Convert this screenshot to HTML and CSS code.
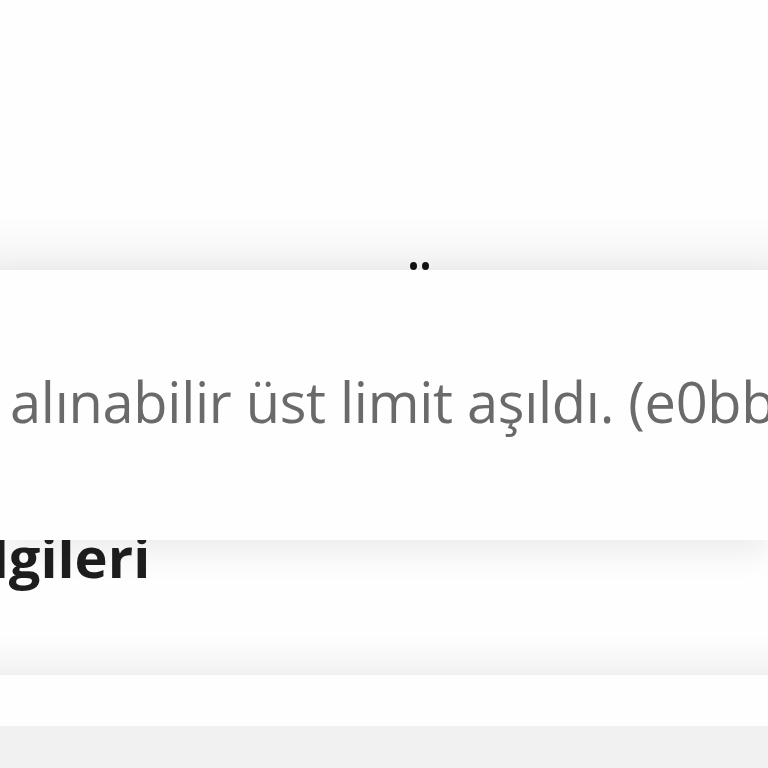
FILE: index.html
```html
<!DOCTYPE html>
<html lang="tr">
<head>
<meta charset="utf-8">
<link rel="stylesheet" href="styles.css">
</head>
<body>
<div class="page">
  <div class="top">
    <span class="dots"><i class="dot"></i><i class="dot"></i></span>
  </div>
  <div class="card">
    <p class="msg">alınabilir üst limit aşıldı. (e0bb</p>
  </div>
  <div class="section">
    <h2 class="heading">Bilgileri</h2>
  </div>
  <div class="card2"></div>
  <div class="rest"></div>
</div>
</body>
</html>
```
FILE: styles.css
```css
html, body {
  margin: 0;
  padding: 0;
  background: #f2f2f2;
  overflow: hidden;
}
.page {
  width: 768px;
  height: 768px;
  display: flex;
  flex-direction: column;
  overflow: hidden;
}
.top {
  height: 270px;
  flex: none;
  background: linear-gradient(to bottom, #fefefe 0, #fefefe 215px, #f9f9f9 245px, #efefef 270px);
  position: relative;
}
.dots {
  position: absolute;
  left: 410px;
  top: 262px;
  display: flex;
  gap: 5px;
}
.dot {
  display: block;
  width: 7px;
  height: 8px;
  border-radius: 50%;
  background: #111;
}
.card {
  height: 270px;
  flex: none;
  background: #fefefe;
  position: relative;
  z-index: 2;
  display: flex;
  align-items: center;
  box-shadow: 0 14px 30px rgba(0,0,0,0.07);
}
.msg {
  margin: 0 0 8px 0;
  padding-left: 10px;
  white-space: nowrap;
  font-family: "Open Sans", sans-serif;
  font-size: 56px;
  color: #6a6a6a;
  letter-spacing: -0.3px;
}
.section {
  height: 135px;
  flex: none;
  background: linear-gradient(to bottom, #fefefe 0, #fefefe 95px, #f6f6f6 125px, #f0f0f0 135px);
  position: relative;
  z-index: 1;
}
.heading {
  margin: 0;
  margin-left: -63px;
  margin-top: -17px;
  font-family: "Open Sans", sans-serif;
  font-weight: 700;
  font-size: 56px;
  line-height: 1.2;
  color: #1e1e1e;
  white-space: nowrap;
}
.card2 {
  height: 51px;
  flex: none;
  background: #fefefe;
}
.rest {
  flex: 1;
  background: #f1f1f1;
}
```
